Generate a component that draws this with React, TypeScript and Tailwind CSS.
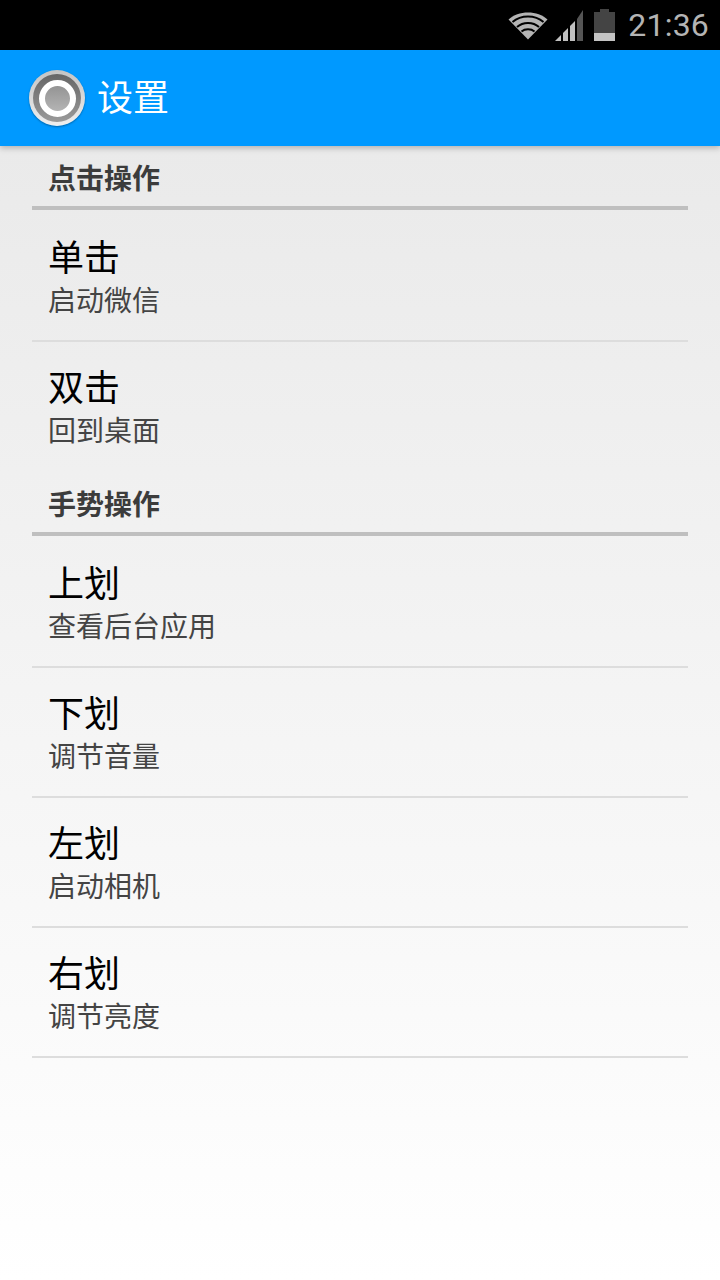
import React from "react";

const cjk = "font-['Roboto','Noto_Sans_CJK_SC',sans-serif]";

const Item = ({ title, sub, last }: { title: string; sub: string; last?: boolean }) => {
  return (
    <div className={`h-[130px] mx-8 px-[16px] pt-[25px] ${last ? "" : "border-b-2 border-[#dddddd]"}`}>
      <div className="text-[36px] leading-[44px] text-black">{title}</div>
      <div className="text-[28px] leading-[42px] text-[#444444]">{sub}</div>
    </div>
  );
};

const Section = ({ title }: { title: string }) => {
  return (
    <div className="h-[64px] mb-[2px] mx-8 px-[16px] border-b-4 border-[#bfbfbf] pt-[14px]">
      <div className="text-[28px] leading-[40px] font-bold text-[#3c3c3c]">{title}</div>
    </div>
  );
};

const StatusBar = () => {
  return (
    <div className="h-[50px] bg-black flex items-center justify-end pr-[11px]">
      <svg width="40" height="30" viewBox="0 0 40 30" className="mr-[7px] mt-[-1px]">
        <path d="M0.5 9.5 C10 0 30 0 39.5 9.5 L20 29.5 Z" fill="#b4b4b4" />
        <path d="M4.5 12 C13 4.5 27 4.5 35.5 12" fill="none" stroke="#000" strokeWidth="2" />
        <path d="M9 17 C15 11.5 25 11.5 31 17" fill="none" stroke="#000" strokeWidth="2" />
        <path d="M13.5 21.5 C17 18.5 23 18.5 26.5 21.5" fill="none" stroke="#000" strokeWidth="2" />
      </svg>
      <svg width="28" height="32" viewBox="0 0 28 32" className="mr-[11px]">
        <path d="M0 32 L6 26 V32 Z" fill="#c0c0c0" />
        <path d="M8 24 L13 19 V32 H8 Z" fill="#c0c0c0" />
        <path d="M15 17 L20 12 V32 H15 Z" fill="#c0c0c0" />
        <path d="M22 10 L28 1 V32 H22 Z" fill="#555555" />
      </svg>
      <svg width="21" height="32" viewBox="0 0 21 32" className="mr-[13px]">
        <rect x="6" y="0" width="9" height="3" fill="#444444" />
        <rect x="0" y="3" width="21" height="29" fill="#444444" />
        <rect x="0" y="24" width="21" height="8" fill="#c4c4c4" />
      </svg>
      <div className="text-[32px] leading-[50px] text-[#b4b4b4] font-['Roboto',sans-serif] tracking-[0.2px]">21:36</div>
    </div>
  );
};

const AppBar = () => {
  return (
    <div className="relative z-10 h-[96px] bg-[#0099ff] flex items-center pl-[29px] shadow-[0_2px_6px_rgba(0,0,0,0.25)]">
      <div className="w-[56px] h-[56px] rounded-full bg-gradient-to-b from-[#c4c4c4] to-[#efefef] flex items-center justify-center shadow-[0_1px_2px_rgba(0,0,0,0.35)]">
        <div className="w-[48px] h-[48px] rounded-full bg-gradient-to-b from-[#666666] to-[#9a9a9a] flex items-center justify-center">
          <div className="w-[37px] h-[37px] rounded-full border-[6px] border-white bg-gradient-to-b from-[#949494] to-[#b4b4b4]" />
        </div>
      </div>
      <div className="ml-[12px] mt-[2px] text-[36px] leading-[44px] text-white">设置</div>
    </div>
  );
};

export default function App() {
  return (
    <div className={`w-[720px] h-[1280px] overflow-hidden flex flex-col ${cjk}`}>
      <StatusBar />
      <AppBar />
      <div className="flex-1 bg-gradient-to-b from-[#eaeaea] to-[#ffffff]">
        <Section title="点击操作" />
        <Item title="单击" sub="启动微信" />
        <Item title="双击" sub="回到桌面" last />
        <Section title="手势操作" />
        <Item title="上划" sub="查看后台应用" />
        <Item title="下划" sub="调节音量" />
        <Item title="左划" sub="启动相机" />
        <Item title="右划" sub="调节亮度" />
      </div>
    </div>
  );
}
